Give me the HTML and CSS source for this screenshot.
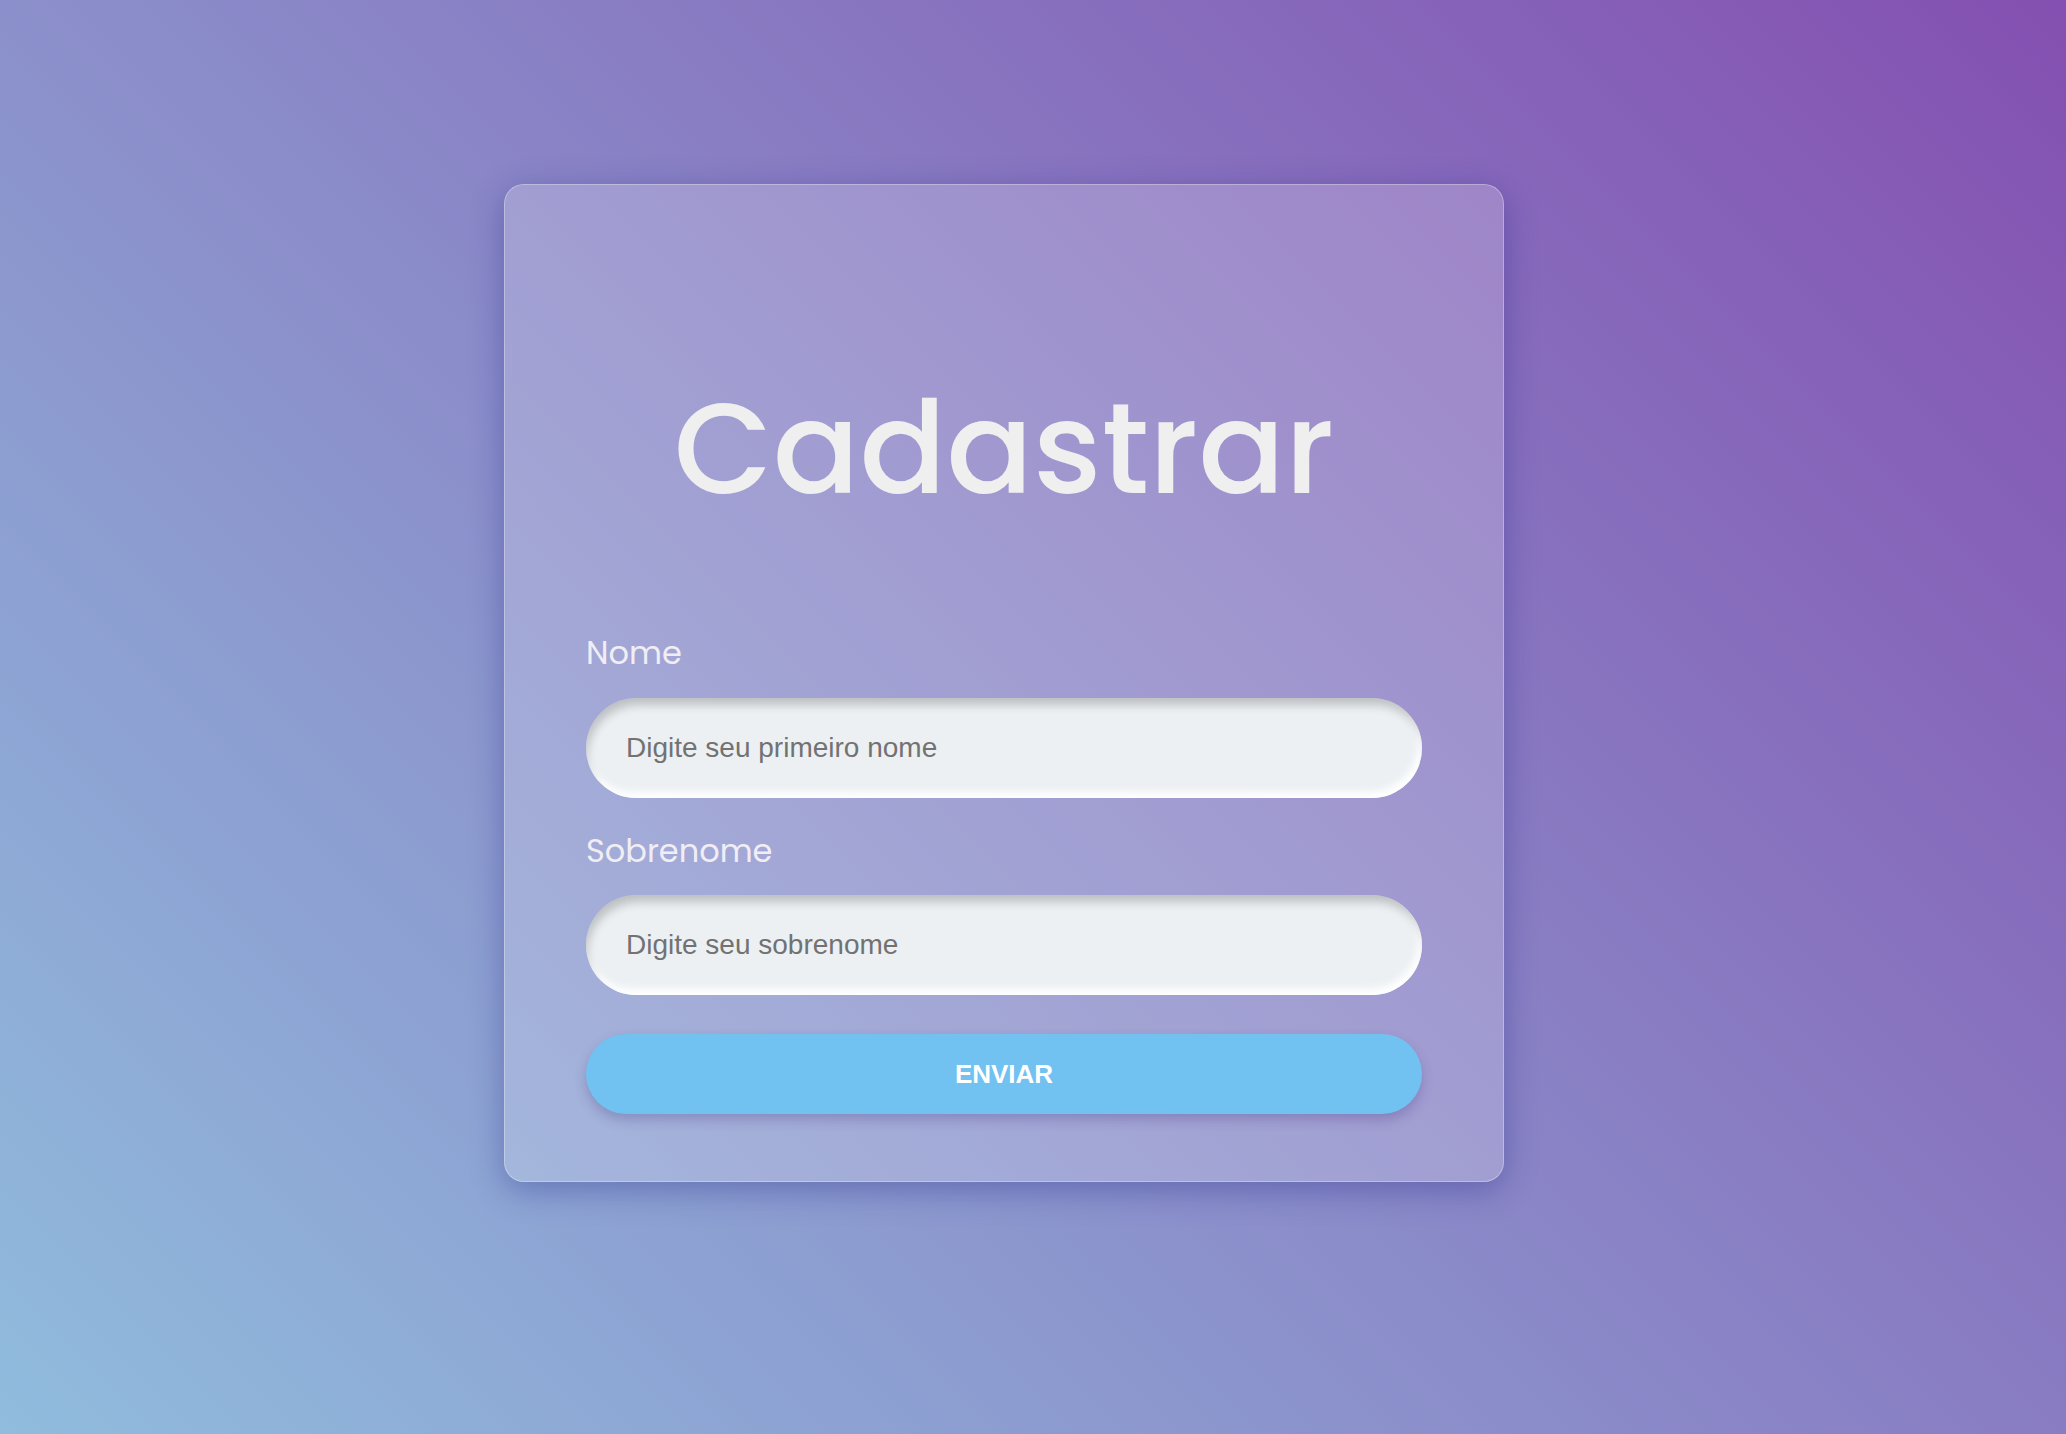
FILE: index.html
```html
<!DOCTYPE html>
<html lang="pt-BR">
<head>
<meta charset="utf-8">
<title>Cadastrar</title>
<link rel="stylesheet" href="styles.css">
</head>
<body>
<main class="page">
  <form class="card" onsubmit="return false">
    <h1 class="title">Cadastrar</h1>
    <label class="label" for="nome">Nome</label>
    <input class="field" id="nome" type="text" placeholder="Digite seu primeiro nome">
    <label class="label label-second" for="sobrenome">Sobrenome</label>
    <input class="field" id="sobrenome" type="text" placeholder="Digite seu sobrenome">
    <button class="submit" type="submit">ENVIAR</button>
  </form>
</main>
</body>
</html>
```
FILE: styles.css
```css
* { box-sizing: border-box; }

html, body {
  margin: 0;
  height: 100%;
}

body {
  background: linear-gradient(45deg, #90bcdd 0%, #8450b1 100%);
  font-family: "Poppins", "Lato", sans-serif;
}

.page {
  height: 100vh;
  display: flex;
  align-items: center;
  justify-content: center;
  padding: 0 58px 68px 0;
}

.card {
  width: 1000px;
  display: flex;
  flex-direction: column;
  padding: 200px 81px 67px;
  background: rgba(255, 255, 255, 0.2);
  border: 1px solid rgba(255, 255, 255, 0.3);
  border-radius: 20px;
  box-shadow: 0 8px 32px rgba(31, 38, 135, 0.37);
}

.title {
  margin: 0 0 124px;
  font-size: 128px;
  line-height: 128px;
  font-weight: 500;
  color: #efefef;
  text-align: center;
}

.label {
  display: block;
  font-size: 32px;
  line-height: 32px;
  color: #f0eef4;
  margin-bottom: 29px;
}

.label-second {
  margin-top: 37px;
  margin-bottom: 28px;
}

.field {
  display: block;
  width: 100%;
  height: 100px;
  border: none;
  outline: none;
  border-radius: 50px;
  padding: 0 40px;
  background: #ecf0f3;
  font-family: "Liberation Sans", Arial, sans-serif;
  font-size: 28px;
  color: #555;
  box-shadow: inset 3px 9px 10px -2px rgba(0, 0, 0, 0.2), inset -3px -6px 8px #ffffff;
}

.field::placeholder {
  color: #727272;
}

.submit {
  margin-top: 39px;
  height: 80px;
  width: 100%;
  border: none;
  border-radius: 40px;
  background: #71c1f1;
  color: #ffffff;
  font-family: "Liberation Sans", Arial, sans-serif;
  font-weight: 700;
  font-size: 26px;
  cursor: pointer;
  box-shadow: 0 6px 12px rgba(60, 40, 120, 0.25);
}
```
